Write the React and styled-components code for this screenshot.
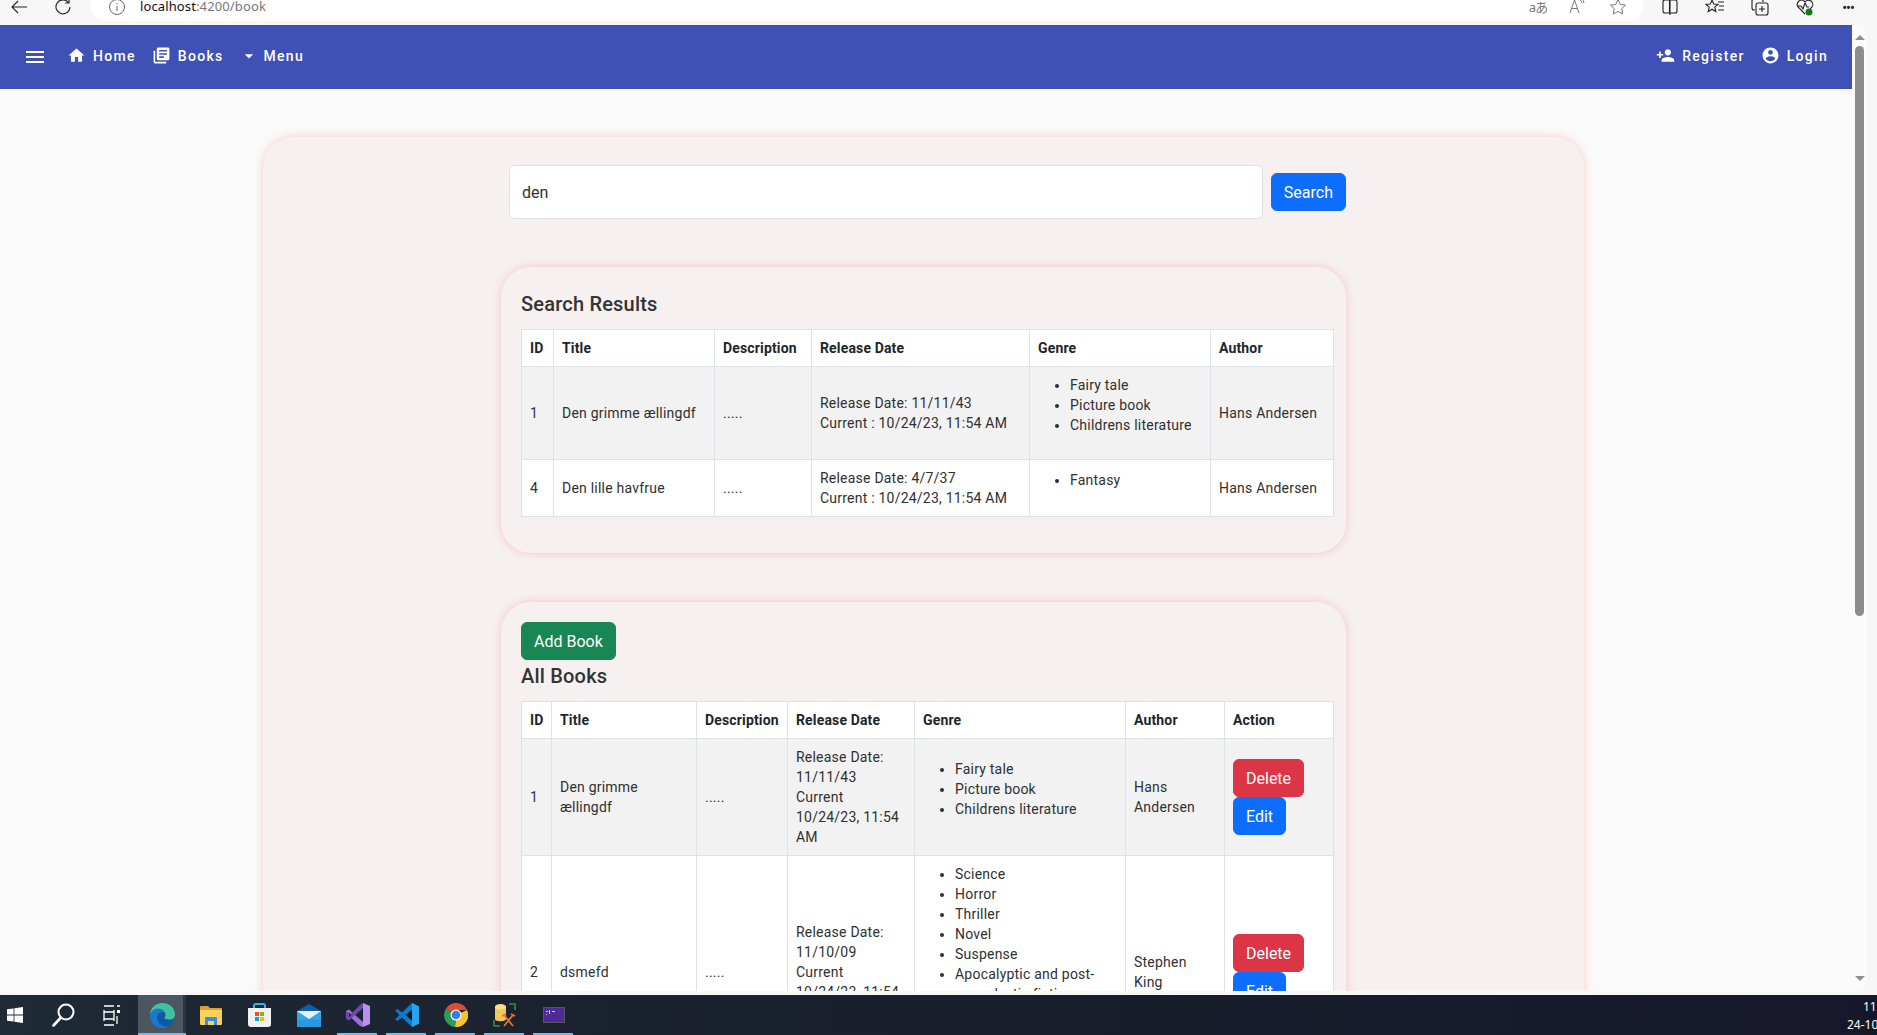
import React from "react";
import styled, { createGlobalStyle } from "styled-components";

const GlobalStyle = createGlobalStyle`
  html, body {
    margin: 0;
    height: 100%;
    overflow: hidden;
    background: #f7f7f7;
  }
  * { box-sizing: border-box; }
`;

const Frame = styled.div`
  height: 100vh;
  display: flex;
  flex-direction: column;
  overflow: hidden;
  font-family: Roboto, "Liberation Sans", sans-serif;
  color: #212529;
`;

/* browser chrome */
const BrowserBar = styled.div`
  height: 25px;
  flex: none;
  display: flex;
  background: #f7f7f7;
  overflow: hidden;
`;

const ToolIcon = styled.span`
  flex: none;
  width: ${(props) => props.$w}px;
  height: 13px;
  margin-left: ${(props) => props.$left || 0}px;
  display: flex;
  align-items: center;
  justify-content: center;
  color: ${(props) => props.$color || "#333"};
  font-family: "Noto Sans", "Noto Sans CJK JP", sans-serif;
  font-size: 13px;
  letter-spacing: -1px;
  white-space: nowrap;
  overflow: visible;
  svg { flex: none; overflow: visible; }
`;

const UrlPill = styled.div`
  width: 1552px;
  height: 21px;
  margin-left: 20px;
  padding-right: 17px;
  flex: none;
  display: flex;
  align-items: flex-start;
  background: #fff;
  border-radius: 0 0 14px 14px;
`;

const UrlText = styled.span`
  margin-left: 15px;
  margin-top: -3px;
  font-family: "Noto Sans", sans-serif;
  font-size: 13px;
  line-height: 18px;
  letter-spacing: 0.12px;
  color: #777;
  flex: 1;
  b { font-weight: 400; color: #111; }
`;

/* page viewport */
const Viewport = styled.div`
  flex: none;
  height: 966px;
  display: flex;
  padding-right: 10px;
  overflow: hidden;
`;

const Page = styled.div`
  flex: 1;
  min-width: 0;
  background: #fafafa;
  overflow: hidden;
`;

const Scrollbar = styled.div`
  flex: none;
  width: 15px;
  background: #fbfbfb;
  border-radius: 0 10px 10px 0;
  display: flex;
  flex-direction: column;
  align-items: center;
  padding-top: 8px;
`;

const ScrollArrow = styled.span`
  flex: none;
  width: 0;
  height: 0;
  border-left: 5px solid transparent;
  border-right: 5px solid transparent;
  border-${(props) => (props.$down ? "top" : "bottom")}: 5px solid #8f8f8f;
  margin-top: ${(props) => props.$top}px;
`;

const ScrollThumb = styled.span`
  flex: none;
  width: 9px;
  height: 570px;
  margin-top: 6px;
  border-radius: 5px;
  background: #8c8c8c;
`;

const NavBar = styled.nav`
  height: 64px;
  background: #3f51b5;
  display: flex;
  align-items: center;
  padding: 0 24px 0 23px;
  color: #fff;
`;

const NavIcon = styled.svg`
  flex: none;
  width: ${(props) => props.$size || 19}px;
  height: ${(props) => props.$size || 19}px;
  fill: currentColor;
`;

const NavItem = styled.a`
  display: flex;
  align-items: center;
  gap: ${(props) => props.$gap ?? 7}px;
  margin-left: ${(props) => props.$left}px;
  margin-top: -3px;
  font-size: 14px;
  font-weight: 500;
  letter-spacing: 1.3px;
  white-space: nowrap;
`;

const NavSpacer = styled.div`
  flex: 1;
`;

const BigCard = styled.section`
  width: 1321px;
  margin: 48px 0 0 263px;
  padding: 28px 0 0 238px;
  background: #f6f0f0;
  border-radius: 30px;
  box-shadow: 0 0 8px rgba(255, 100, 100, 0.32);
`;

const SearchRow = styled.form`
  display: flex;
  align-items: center;
  gap: 8px;
  width: 837px;
  margin-left: 8px;
`;

const SearchInput = styled.input`
  flex: 1;
  height: 54px;
  padding: 0 12px;
  border: 1px solid #dee2e6;
  border-radius: 6px;
  background: #fff;
  color: #2f2f2f;
  font-family: inherit;
  font-size: 16px;
  outline: none;
`;

const Button = styled.button`
  display: block;
  width: fit-content;
  height: 38px;
  padding: 0 12px;
  border: 1px solid ${(props) => props.$color};
  border-radius: 6px;
  background: ${(props) => props.$color};
  color: #fff;
  font-family: inherit;
  font-size: 16px;
`;

const InnerCard = styled.div`
  width: 845px;
  margin-top: ${(props) => props.$top || 48}px;
  padding: 20px 13px 20px 20px;
  background: #f6f0f0;
  border-radius: 30px;
  box-shadow: 0 0 8px rgba(255, 100, 100, 0.32);
`;

const Heading = styled.h5`
  margin: 5px 0 13px;
  font-size: 20px;
  line-height: 24px;
  font-weight: 500;
  letter-spacing: 0.2px;
  color: #333;
`;

const AllHeading = styled(Heading)`
  margin-top: 4px;
`;

const Table = styled.table`
  width: 812px;
  table-layout: fixed;
  border-collapse: collapse;
  margin-bottom: 16px;
  background: #fff;
  font-size: 14px;
  line-height: 20px;
  letter-spacing: 0.22px;
  color: #303030;
`;

const Col = styled.col`
  width: ${(props) => props.$w}px;
`;

const Th = styled.th`
  padding: 8px;
  border: 1px solid #dee2e6;
  text-align: left;
  font-weight: 700;
  letter-spacing: 0.15px;
  color: #212529;
`;

const Row = styled.tr`
  background: ${(props) => (props.$striped ? "#f2f2f2" : "#fff")};
`;

const Td = styled.td`
  padding: 8px;
  border: 1px solid #dee2e6;
  vertical-align: middle;
`;

const GenreList = styled.ul`
  margin: 0 0 16px;
  padding-left: 32px;
`;

const Taskbar = styled.div`
  flex: none;
  margin-top: 4px;
  height: 40px;
  display: flex;
  background: linear-gradient(90deg, #1e2a35 0%, #1a212e 35%, #16182a 100%);
  color: #fff;
  overflow: hidden;
`;

const TaskSlot = styled.div`
  position: relative;
  flex: none;
  width: ${(props) => props.$w || 49}px;
  margin-left: ${(props) => props.$left || 0}px;
  display: flex;
  align-items: center;
  justify-content: center;
  ${(props) =>
    props.$active &&
    "background: linear-gradient(90deg, #4c5660 45px, #2c3640 45px, #2c3640 48px, transparent 48px);"}
  ${(props) =>
    props.$open &&
    `&::after {
      content: "";
      position: absolute;
      left: ${props.$active ? 0 : 4}px;
      right: ${props.$active ? 1 : 5}px;
      bottom: 0;
      height: 2px;
      background: #76b9ed;
    }`}
`;

const Clock = styled.div`
  margin-left: auto;
  width: 30px;
  padding-top: 3px;
  font-family: "Noto Sans", sans-serif;
  font-size: 12px;
  line-height: 18px;
  white-space: nowrap;
  display: flex;
  flex-direction: column;
  align-items: flex-start;
  span:first-child { margin-left: 16px; }
`;

const searchBooks = [
  {
    id: 1,
    title: "Den grimme ællingdf",
    date: "11/11/43",
    genres: ["Fairy tale", "Picture book", "Childrens literature"],
    author: "Hans Andersen",
  },
  {
    id: 4,
    title: "Den lille havfrue",
    date: "4/7/37",
    genres: ["Fantasy"],
    author: "Hans Andersen",
  },
];

const allBooks = [
  searchBooks[0],
  {
    id: 2,
    title: "dsmefd",
    date: "11/10/09",
    genres: [
      "Science",
      "Horror",
      "Thriller",
      "Novel",
      "Suspense",
      "Apocalyptic and post-apocalyptic fiction",
      "Fantasy",
      "Drama",
      "Mystery",
    ],
    author: "Stephen King",
  },
];

function BookTable({ widths, books, withAction }) {
  const heads = ["ID", "Title", "Description", "Release Date", "Genre", "Author"];
  if (withAction) heads.push("Action");
  return (
    <Table>
      <colgroup>
        {widths.map((w, i) => (
          <Col key={i} $w={w} />
        ))}
      </colgroup>
      <thead>
        <tr>
          {heads.map((h) => (
            <Th key={h}>{h}</Th>
          ))}
        </tr>
      </thead>
      <tbody>
        {books.map((book, i) => (
          <Row key={book.id} $striped={i === 0}>
            <Td>{book.id}</Td>
            <Td>{book.title}</Td>
            <Td>.....</Td>
            <Td>
              Release Date: {book.date}
              <br />
              {withAction ? (
                <>
                  Current
                  <br />
                  10/24/23, 11:54 AM
                </>
              ) : (
                "Current : 10/24/23, 11:54 AM"
              )}
            </Td>
            <Td>
              <GenreList>
                {book.genres.map((g) => (
                  <li key={g}>{g}</li>
                ))}
              </GenreList>
            </Td>
            <Td>{book.author}</Td>
            {withAction && (
              <Td>
                <Button type="button" $color="#dc3545">Delete</Button>
                <Button type="button" $color="#0d6efd">Edit</Button>
              </Td>
            )}
          </Row>
        ))}
      </tbody>
    </Table>
  );
}

function AppIcon({ name }) {
  switch (name) {
    case "windows":
      return (
        <svg width="16" height="16" viewBox="0 0 16 16" fill="#fff">
          <path d="M0 2.300 6.600 1.400V7.600H0zM7.400 1.300 16 0V7.600H7.400zM0 8.400H6.600V14.600L0 13.700zM7.400 8.400H16V16L7.400 14.700z" />
        </svg>
      );
    case "search":
      return (
        <svg width="23" height="24" viewBox="0 0 23 24" fill="none" stroke="#fff" strokeWidth="2">
          <circle cx="14" cy="9" r="7.500" />
          <path d="M8.500 15 1.500 22.500" strokeWidth="2.600" strokeLinecap="round" />
        </svg>
      );
    case "taskview":
      return (
        <svg width="17" height="21" viewBox="0 0 17 21" fill="none" stroke="#fff" strokeWidth="1.300">
          <path d="M1 1h10M1 20h10M1 7h10v7H1zM1 7V5M11 7V5M1 14v2M11 14v2" />
          <path d="M14 5h3v3h-3z" fill="#fff" stroke="none" />
          <path d="M14 1h3M14 11v8" />
        </svg>
      );
    case "edge":
      return (
        <svg width="25" height="25" viewBox="0 0 24 24">
          <path d="M0 12C0 5 5 0 12 0c7 0 12 5 12 11 0 3-2 5-5 5h-5c-1 0-1-.8-.3-1.500 1-1 1.300-2 1.300-3 0-3-3-6-7-6-4 0-7 2.500-8 6.500z" fill="#3ec3a0" />
          <path d="M0 12C1 8 4 5.500 8 5.500c3 0 5 1.500 6 3.500-3-1-7 1-7 5 0 4 3 7 7 8 1 .3 2 .4 3 .2C15 23.500 13.500 24 12 24 5 24 0 18.500 0 12z" fill="#1a78cf" />
          <path d="M7 14c0-3 3-5.500 7-5 .5 1 .4 2-.3 3-.7.800-.7 1.500 0 2.500 1 1.200 3 1.500 5 1.500h4c-1 3.500-3.500 5.800-6 6.500-5 .8-9.700-3-9.700-8.500z" fill="#0b5aa6" />
        </svg>
      );
    case "explorer":
      return (
        <svg width="22" height="19" viewBox="0 0 22 19">
          <path d="M0 1a1 1 0 0 1 1-1h7l2 2h11a1 1 0 0 1 1 1v2H0z" fill="#e0a030" />
          <path d="M0 4h22v14a1 1 0 0 1-1 1H1a1 1 0 0 1-1-1z" fill="#fbd157" />
          <path d="M5 19v-7a1 1 0 0 1 1-1h10a1 1 0 0 1 1 1v7h-3v-4H8v4z" fill="#3a8fd6" />
        </svg>
      );
    case "store":
      return (
        <svg width="23" height="24" viewBox="0 0 23 24">
          <path d="M6 6V2.500C6 1.500 7 1 8 1h7c1 0 2 .5 2 1.500V6" fill="none" stroke="#2fb7e8" strokeWidth="2" />
          <path d="M0 5h23v16a3 3 0 0 1-3 3H3a3 3 0 0 1-3-3z" fill="#f1f1f1" />
          <path d="M7 9h4v4H7z" fill="#f25022" />
          <path d="M12 9h4v4h-4z" fill="#7fba00" />
          <path d="M7 14h4v4H7z" fill="#00a4ef" />
          <path d="M12 14h4v4h-4z" fill="#ffb900" />
        </svg>
      );
    case "mail":
      return (
        <svg width="24" height="23" viewBox="0 0 24 23">
          <path d="M0 7 12 0l12 7v2H0z" fill="#0f5ea8" />
          <path d="M0 7h24v16H0z" fill="#33a7e8" />
          <path d="M0 7h24L12 15z" fill="#e8f4fc" />
          <path d="M0 23V17l0-1 12-1 12 1v7z" fill="#1d8adb" opacity="0.5" />
        </svg>
      );
    case "vs":
      return (
        <svg width="24" height="24" viewBox="0 0 24 24">
          <path d="M17 0 24 3v18l-7 3z" fill="#b98ff0" />
          <path d="M0 8 3 6.500 17 19v5l-3-1L0 10z" fill="#9a6fdb" />
          <path d="M17 0v5L3 17.500 0 16V8l5 3 9-9z" fill="#6f4bb0" />
          <path d="M3 9.500v5L5.500 12z" fill="#2a2440" />
          <path d="M12 12l5-4.500v9z" fill="#1c2030" />
        </svg>
      );
    case "vscode":
      return (
        <svg width="24" height="24" viewBox="0 0 24 24">
          <path d="M17 0 24 3.500v17L17 24 7 14.500 2.500 18 0 16.500 4.500 12 0 7.500 2.500 6 7 9.500z" fill="#0a7ccb" />
          <path d="M17 6.500 10.500 12l6.500 5.500z" fill="#16181f" />
          <path d="M17 0 24 3.500v17L17 24z" fill="#25a5ed" />
        </svg>
      );
    case "chrome":
      return (
        <svg width="24" height="24" viewBox="0 0 24 24">
          <path d="M12 12 2 5.500A12 12 0 0 1 23 7H12z" fill="#e04a3a" />
          <path d="M12 12 23 7a12 12 0 0 1-12 17z" fill="#f7c32d" />
          <path d="M12 12l-1 12A12 12 0 0 1 2 5.500z" fill="#2f9e52" />
          <circle cx="12" cy="12" r="5.500" fill="#fff" />
          <circle cx="12" cy="12" r="4.300" fill="#3b7be6" />
        </svg>
      );
    case "db":
      return (
        <svg width="24" height="24" viewBox="0 0 24 24" fill="none">
          <path d="M2 4c0-4 11-4 11 0v12c0 3-11 3-11 0z" fill="#efc75e" />
          <ellipse cx="7.500" cy="4" rx="5.500" ry="2.500" fill="#f8e08a" />
          <path d="M16 1h6v6M1 17v6h6" stroke="#3b8a46" strokeWidth="1.600" />
          <path d="M11 12l9 11M20 12l-9 11M9 13l4-2M22 13l-4-2" stroke="#e8762c" strokeWidth="1.800" />
        </svg>
      );
    default:
      return (
        <svg width="22" height="16" viewBox="0 0 22 16">
          <path d="M0 0h22v16H0z" fill="#55555c" />
          <path d="M1 1h20v14H1z" fill="#4f2a94" />
          <path d="M3 4h2v1H3zM6 3h1v4H6zM9 4h3v1H9zM3 7h1v1H3z" fill="#cfc6e6" />
        </svg>
      );
  }
}

export default function App() {
  return (
    <Frame>
      <GlobalStyle />
      <BrowserBar>
        <ToolIcon $w={16} $left={11}>
          <svg width="16" height="14" viewBox="0 0 16 14" fill="none" stroke="#222" strokeWidth="1.100">
            <path d="M16 7H1M7 1 1 7l6 6" />
          </svg>
        </ToolIcon>
        <ToolIcon $w={16} $left={28}>
          <svg width="16" height="16" viewBox="0 0 16 16" fill="none" stroke="#222" strokeWidth="1.100">
            <path d="M13.500 3.500A7 7 0 1 0 15 8M14 0v4h-4" />
          </svg>
        </ToolIcon>
        <UrlPill>
          <ToolIcon $w={16} $left={18}>
            <svg width="16" height="16" viewBox="0 0 16 16" fill="none" stroke="#666" strokeWidth="1">
              <circle cx="8" cy="8" r="7.500" />
              <path d="M8 7v5M8 4v1.500" />
            </svg>
          </ToolIcon>
          <UrlText>
            <b>localhost</b>:4200/book
          </UrlText>
          <ToolIcon $w={18} $color="#777">aあ</ToolIcon>
          <ToolIcon $w={16} $left={22}>
            <svg width="16" height="16" viewBox="0 0 16 16" fill="none" stroke="#777" strokeWidth="1">
              <path d="M1 14 5.500 1 10 14M3 9.500h5M11 1a4 4 0 0 1 2 3M13 0a6 6 0 0 1 2 4" />
            </svg>
          </ToolIcon>
          <ToolIcon $w={16} $left={25}>
            <svg width="16" height="16" viewBox="0 0 16 16" fill="none" stroke="#777" strokeWidth="1">
              <path d="M8 0.500 10.300 5.500 15.500 6.100 11.700 9.700 12.700 15 8 12.400 3.300 15 4.300 9.700.5 6.100 5.700 5.500z" />
            </svg>
          </ToolIcon>
        </UrlPill>
        <ToolIcon $w={16} $left={19}>
          <svg width="16" height="16" viewBox="0 0 16 16" fill="none" stroke="#222" strokeWidth="1.100">
            <path d="M7.500 1H3a2 2 0 0 0-2 2v9a2 2 0 0 0 2 2h4.500zM8.500 1H13a2 2 0 0 1 2 2v9a2 2 0 0 1-2 2H8.500M8 0v16" />
          </svg>
        </ToolIcon>
        <ToolIcon $w={18} $left={28}>
          <svg width="18" height="16" viewBox="0 0 18 16" fill="none" stroke="#222" strokeWidth="1.100">
            <path d="M6 1 7.700 5 12 5.400 8.800 8.200 9.800 12.500 6 10.200 2.200 12.500 3.200 8.200 0 5.400 4.300 5zM12 3h6M13 7h5M12 11h6" />
          </svg>
        </ToolIcon>
        <ToolIcon $w={18} $left={27}>
          <svg width="18" height="18" viewBox="0 0 18 18" fill="none" stroke="#222" strokeWidth="1.100">
            <path d="M4 12H3a2 2 0 0 1-2-2V3a2 2 0 0 1 2-2h7a2 2 0 0 1 2 2v1" />
            <rect x="5" y="5" width="12" height="12" rx="2" />
            <path d="M11 8v6M8 11h6" />
          </svg>
        </ToolIcon>
        <ToolIcon $w={18} $left={27}>
          <svg width="18" height="18" viewBox="0 0 18 18" fill="none" stroke="#222" strokeWidth="1.100">
            <path d="M9 16 2 9a4 4 0 0 1 7-5 4 4 0 0 1 7 5l-2 2M2 8h3l2 3 2-6 2 4h2" />
            <circle cx="13" cy="14" r="3.500" fill="#107c10" stroke="none" />
          </svg>
        </ToolIcon>
        <ToolIcon $w={16} $left={26} $color="#222">•••</ToolIcon>
      </BrowserBar>

      <Viewport>
        <Page>
          <NavBar>
            <NavIcon $size={24} viewBox="0 0 24 24">
              <path d="M3 18h18v-2H3v2zm0-5h18v-2H3v2zm0-7v2h18V6H3z" />
            </NavIcon>
            <NavItem $left={20}>
              <NavIcon viewBox="0 0 24 24">
                <path d="M10 20v-6h4v6h5v-8h3L12 3 2 12h3v8z" />
              </NavIcon>
              Home
            </NavItem>
            <NavItem $left={16}>
              <NavIcon viewBox="0 0 24 24">
                <path d="M4 6H2v14c0 1.100.9 2 2 2h14v-2H4V6zm16-4H8c-1.100 0-2 .9-2 2v12c0 1.100.9 2 2 2h12c1.100 0 2-.9 2-2V4c0-1.100-.9-2-2-2zm-1 9H9V9h10v2zm-4 4H9v-2h6v2zm4-8H9V5h10v2z" />
              </NavIcon>
              Books
            </NavItem>
            <NavItem $left={15} $gap={5}>
              <NavIcon $size={20} viewBox="0 0 24 24">
                <path d="M7 10l5 5 5-5z" />
              </NavIcon>
              Menu
            </NavItem>
            <NavSpacer />
            <NavItem $left={0}>
              <NavIcon viewBox="0 0 24 24">
                <path d="M15 12c2.210 0 4-1.790 4-4s-1.790-4-4-4-4 1.790-4 4 1.790 4 4 4zm-9-2V7H4v3H1v2h3v3h2v-3h3v-2H6zm9 4c-2.670 0-8 1.340-8 4v2h16v-2c0-2.660-5.330-4-8-4z" />
              </NavIcon>
              Register
            </NavItem>
            <NavItem $left={16}>
              <NavIcon viewBox="0 0 24 24">
                <path d="M12 2C6.480 2 2 6.480 2 12s4.480 10 10 10 10-4.480 10-10S17.520 2 12 2zm0 3c1.660 0 3 1.340 3 3s-1.340 3-3 3-3-1.340-3-3 1.340-3 3-3zm0 14.200c-2.500 0-4.710-1.280-6-3.220.03-1.990 4-3.080 6-3.080 1.990 0 5.970 1.090 6 3.080-1.290 1.940-3.500 3.220-6 3.220z" />
              </NavIcon>
              Login
            </NavItem>
          </NavBar>

          <BigCard>
            <SearchRow>
              <SearchInput defaultValue="den" />
              <Button type="button" $color="#0d6efd">Search</Button>
            </SearchRow>

            <InnerCard>
              <Heading>Search Results</Heading>
              <BookTable widths={[32, 161, 97, 218, 181, 123]} books={searchBooks} />
            </InnerCard>

            <InnerCard $top={49}>
              <Button type="button" $color="#198754">Add Book</Button>
              <AllHeading>All Books</AllHeading>
              <BookTable widths={[30, 145, 91, 127, 211, 99, 109]} books={allBooks} withAction />
            </InnerCard>
          </BigCard>
        </Page>
        <Scrollbar>
          <ScrollArrow $top={2} />
          <ScrollThumb />
          <ScrollArrow $down $top={360} />
        </Scrollbar>
      </Viewport>

      <Taskbar>
        <TaskSlot $w={30}><AppIcon name="windows" /></TaskSlot>
        <TaskSlot $w={66}><AppIcon name="search" /></TaskSlot>
        <TaskSlot $w={30}><AppIcon name="taskview" /></TaskSlot>
        <TaskSlot $left={12} $active $open><AppIcon name="edge" /></TaskSlot>
        <TaskSlot $w={48}><AppIcon name="explorer" /></TaskSlot>
        <TaskSlot><AppIcon name="store" /></TaskSlot>
        <TaskSlot><AppIcon name="mail" /></TaskSlot>
        <TaskSlot $open><AppIcon name="vs" /></TaskSlot>
        <TaskSlot $open><AppIcon name="vscode" /></TaskSlot>
        <TaskSlot $open><AppIcon name="chrome" /></TaskSlot>
        <TaskSlot $open><AppIcon name="db" /></TaskSlot>
        <TaskSlot $open><AppIcon name="terminal" /></TaskSlot>
        <Clock>
          <span>11:54</span>
          <span>24-10-2023</span>
        </Clock>
      </Taskbar>
    </Frame>
  );
}
